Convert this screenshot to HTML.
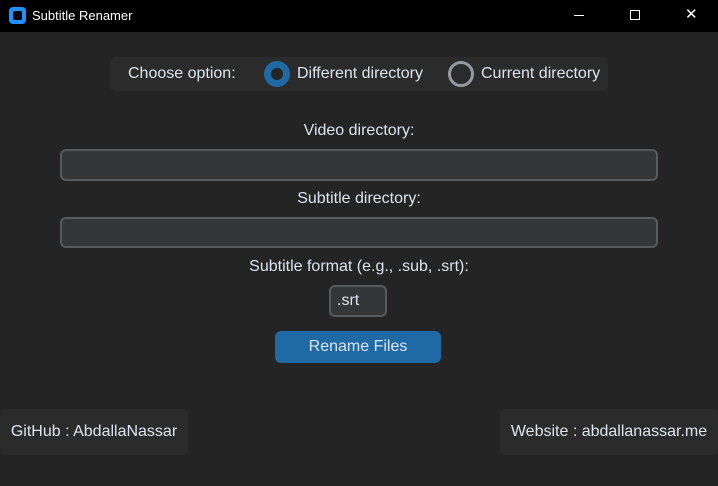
<!DOCTYPE html>
<html><head><style>
body{margin:0;width:718px;height:486px;background:#242424;font-family:"Liberation Sans",sans-serif;position:relative;overflow:hidden;color:#dce4ee}
.a{position:absolute}
.tb{left:0;top:0;width:718px;height:32px;background:#000;color:#fff;font-size:13px}
.lbl{font-size:16px;text-align:center;width:718px;left:0}
.in{background:#343638;border:2px solid #565b5e;border-radius:6px;box-sizing:border-box}
.frame{background:#2b2b2b;border-radius:6px}
</style></head><body>
<div class="a tb">
 <div class="a" style="left:9px;top:7px;width:17px;height:17px;background:#1e90ff;border-radius:4px"><div class="a" style="left:4px;top:4px;width:9px;height:9px;background:#000;border-radius:2px"></div></div>
 <div class="a" style="left:32px;top:8px">Subtitle Renamer</div>
 <div class="a" style="left:574px;top:15px;width:10px;height:1px;background:#fff"></div>
 <div class="a" style="left:630px;top:10px;width:8px;height:8px;border:1px solid #fff"></div>
 <div class="a" style="left:685px;top:5px;font-size:15px">✕</div>
</div>
<div class="a frame" style="left:110px;top:57px;width:498px;height:34px"></div>
<div class="a" style="left:128px;top:65px;font-size:16px">Choose option:</div>
<div class="a" style="left:264px;top:61px;width:26px;height:26px;border-radius:50%;background:#1f6aa5"><div class="a" style="left:7px;top:7px;width:12px;height:12px;border-radius:50%;background:#242424"></div></div>
<div class="a" style="left:297px;top:65px;font-size:16px">Different directory</div>
<div class="a" style="left:448px;top:61px;width:20px;height:20px;border-radius:50%;border:3px solid #949a9f"></div>
<div class="a" style="left:481px;top:65px;font-size:16px">Current directory</div>
<div class="a lbl" style="top:122px">Video directory:</div>
<div class="a in" style="left:60px;top:149px;width:598px;height:32px"></div>
<div class="a lbl" style="top:190px">Subtitle directory:</div>
<div class="a in" style="left:60px;top:217px;width:598px;height:31px"></div>
<div class="a lbl" style="top:258px">Subtitle format (e.g., .sub, .srt):</div>
<div class="a in" style="left:329px;top:285px;width:58px;height:32px;font-size:16px;padding:5px 0 0 6px">.srt</div>
<div class="a" style="left:275px;top:331px;width:166px;height:32px;background:#1f6aa5;border-radius:6px;font-size:16px;text-align:center;line-height:32px">Rename Files</div>
<div class="a frame" style="left:0;top:409px;width:188px;height:46px;font-size:16px;line-height:46px;text-align:center">GitHub : AbdallaNassar</div>
<div class="a frame" style="left:500px;top:409px;width:218px;height:46px;font-size:16px;line-height:46px;text-align:center">Website : abdallanassar.me</div>
</body></html>
